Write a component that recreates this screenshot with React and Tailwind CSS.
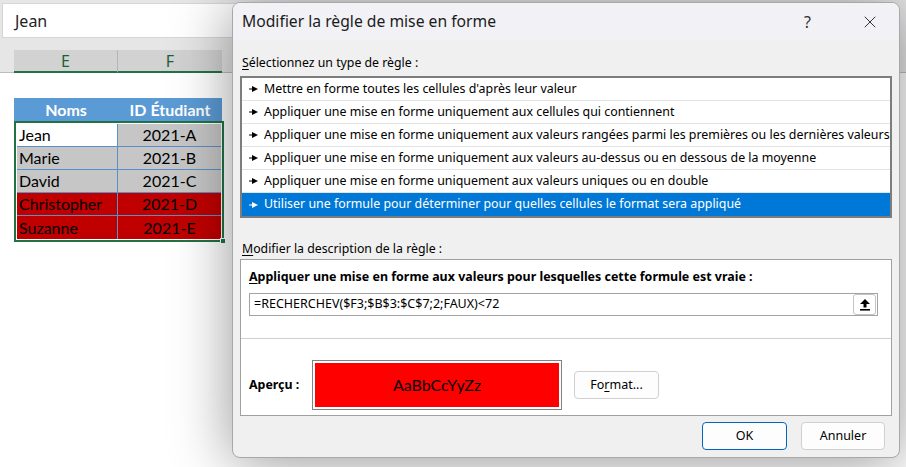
import { X } from 'lucide-react';

const rules = [
  "Mettre en forme toutes les cellules d'après leur valeur",
  'Appliquer une mise en forme uniquement aux cellules qui contiennent',
  'Appliquer une mise en forme uniquement aux valeurs rangées parmi les premières ou les dernières valeurs',
  'Appliquer une mise en forme uniquement aux valeurs au-dessus ou en dessous de la moyenne',
  'Appliquer une mise en forme uniquement aux valeurs uniques ou en double',
  'Utiliser une formule pour déterminer pour quelles cellules le format sera appliqué',
];

const students = [
  { name: 'Jean', id: '2021-A', tone: 'white' },
  { name: 'Marie', id: '2021-B', tone: 'gray' },
  { name: 'David', id: '2021-C', tone: 'gray' },
  { name: 'Christopher', id: '2021-D', tone: 'red' },
  { name: 'Suzanne', id: '2021-E', tone: 'red' },
];

const toneBg = {
  white: 'bg-white',
  gray: 'bg-[#c6c6c6]',
  red: 'bg-[#c00000]',
};

function RuleArrow({ light }) {
  return (
    <svg width="9" height="6" viewBox="0 0 9 6" className="shrink-0">
      <line x1="0" y1="3" x2="4" y2="3" stroke={light ? '#fff' : '#000'} strokeWidth="1.2" />
      <polygon points="3,0 9,3 3,6" fill={light ? '#fff' : '#000'} />
    </svg>
  );
}

function CollapseIcon() {
  return (
    <svg width="10" height="12" viewBox="0 0 10 12">
      <polygon points="5,0 10,5 6.5,5 6.5,8.5 3.5,8.5 3.5,5 0,5" fill="#000" />
      <rect x="0" y="10" width="10" height="1.6" fill="#000" />
    </svg>
  );
}

function Sheet() {
  return (
    <div className="w-full h-full bg-white font-['Lato',sans-serif]">
      {/* formula bar */}
      <div className="h-[50px] bg-[#e6e6e6] pt-[3px] pl-[2px]">
        <div className="h-[35px] w-[260px] bg-white border border-[#d6d6d6] flex items-center pl-[12px] text-[16px] text-[#222] font-['Noto_Sans',sans-serif]">
          Jean
        </div>
      </div>

      {/* column headers */}
      <div className="h-[23px] flex bg-[#e6e6e6]">
        <div className="w-[14px] border-b border-[#bdbdbd]" />
        <div className="w-[104px] bg-[#d2d2d2] border-r border-[#b5b5b5] border-b-2 border-b-[#217346] flex items-center justify-center text-[16px] text-[#1e5e3a] font-['Noto_Sans',sans-serif]">
          E
        </div>
        <div className="w-[104px] bg-[#d2d2d2] border-b-2 border-b-[#217346] flex items-center justify-center text-[16px] text-[#1e5e3a] font-['Noto_Sans',sans-serif]">
          F
        </div>
        <div className="flex-1 border-b border-[#bdbdbd]" />
      </div>

      {/* table */}
      <div className="pt-[25px] pl-[14px]">
        <div className="w-[208px]">
          <div className="h-[23px] flex bg-[#5b9bd5] text-white font-bold text-[16px]">
            <div className="w-[104px] flex items-center justify-center">Noms</div>
            <div className="w-[104px] flex items-center justify-center">ID Étudiant</div>
          </div>
          <div className="relative border-2 border-[#217346] p-[1px] bg-white w-[210px]">
            {students.map((s, i) => (
              <div
                key={s.id}
                className={`h-[23px] flex text-[16px] text-black ${i < students.length - 1 ? 'border-b border-[#5b8fc7]' : ''}`}
              >
                <div className={`w-[101px] border-r border-[#5b8fc7] flex items-center pl-[2px] ${toneBg[s.tone]}`}>
                  {s.name}
                </div>
                <div className={`flex-1 flex items-center justify-center ${s.tone === 'red' ? 'bg-[#c00000]' : 'bg-[#c6c6c6]'}`}>
                  {s.id}
                </div>
              </div>
            ))}
            <div className="absolute -right-[4px] -bottom-[4px] w-[6px] h-[6px] bg-[#217346] border border-white" />
          </div>
        </div>
      </div>
    </div>
  );
}

function Button({ children, primary, className = '' }) {
  return (
    <button
      className={`h-[28px] rounded-[4px] border bg-[#fdfdfd] text-[12.5px] text-black flex items-center justify-center ${
        primary ? 'border-[#0067c0]' : 'border-[#d0d0d0]'
      } ${className}`}
    >
      {children}
    </button>
  );
}

function RuleDialog() {
  return (
    <div className="absolute left-[232px] top-[2px] w-[668px] h-[456px] rounded-[8px] border border-[#a8a8a8] bg-[#f0f0f0] overflow-hidden shadow-[0_4px_60px_rgba(0,0,0,0.42)] font-['Noto_Sans',sans-serif] text-black">
      {/* title bar */}
      <div className="h-[37px] bg-[#f2f2f6] flex items-center pl-[9px] pr-[19px]">
        <span className="text-[15.7px] text-[#1b1b1b] flex-1">Modifier la règle de mise en forme</span>
        <span className="text-[16px] text-[#333] mr-[49px]">?</span>
        <X size={20} strokeWidth={1.1} className="text-[#222]" />
      </div>

      <div className="px-[7px] pt-[15px]">
        <div className="h-[16px] flex items-center pl-[2px] text-[12.3px]">
          <span className="underline underline-offset-2">S</span>électionnez un type de règle :
        </div>

        {/* rule types */}
        <div className="mt-[5px] border-2 border-[#7d7d7d] bg-white">
          {rules.map((r, i) => {
            const sel = i === rules.length - 1;
            return (
              <div
                key={r}
                className={`h-[23px] flex items-center gap-[6px] pl-[7px] text-[12.4px] whitespace-nowrap overflow-hidden ${
                  sel ? 'bg-[#0078d7] text-white' : 'border-b border-[#e3e3e3]'
                }`}
              >
                <RuleArrow light={sel} />
                <span>{r}</span>
              </div>
            );
          })}
        </div>

        <div className="mt-[23px] h-[16px] flex items-center pl-[2px] text-[12.3px]">
          <span className="underline underline-offset-2">M</span>odifier la description de la règle :
        </div>

        {/* description */}
        <div className="mt-[2px] h-[157px] border border-[#a0a0a0] bg-white flex flex-col">
          <div className="px-[8px] pr-[13px] pt-[9px]">
            <div className="h-[16px] flex items-center text-[12.45px] font-bold whitespace-nowrap">
              <span className="underline underline-offset-2">A</span>ppliquer une mise en forme aux valeurs pour lesquelles cette formule est vraie :
            </div>
            <div className="mt-[8px] h-[23px] border border-[#a3a3a3] flex items-center justify-between pl-[4px] pr-[1px]">
              <span className="text-[12.5px]">=RECHERCHEV($F3;$B$3:$C$7;2;FAUX)&lt;72</span>
              <div className="h-[21px] w-[23px] rounded-[3px] border border-[#c4c4c4] bg-white flex items-center justify-center">
                <CollapseIcon />
              </div>
            </div>
          </div>
          <div className="mt-[22px] border-t border-[#cfcfcf]" />
          <div className="mt-[21px] flex items-center pl-[8px]">
            <span className="w-[63px] text-[12.4px] font-bold">Aperçu :</span>
            <div className="w-[250px] h-[50px] border border-[#828282] p-[2px] bg-white">
              <div className="w-full h-full bg-[#ff0000] flex items-center justify-center text-[16px] text-black font-['Lato',sans-serif]">
                AaBbCcYyZz
              </div>
            </div>
            <Button className="ml-[12px] w-[85px] h-[27px]">
              Fo<span className="underline underline-offset-2">r</span>mat...
            </Button>
          </div>
        </div>

        {/* footer */}
        <div className="mt-[6px] flex justify-end gap-[14px] pr-[7px]">
          <Button primary className="w-[85px]">OK</Button>
          <Button className="w-[84px]">Annuler</Button>
        </div>
      </div>
    </div>
  );
}

export default function App() {
  return (
    <div className="relative w-[906px] h-[467px] overflow-hidden bg-white">
      <Sheet />
      <RuleDialog />
    </div>
  );
}
